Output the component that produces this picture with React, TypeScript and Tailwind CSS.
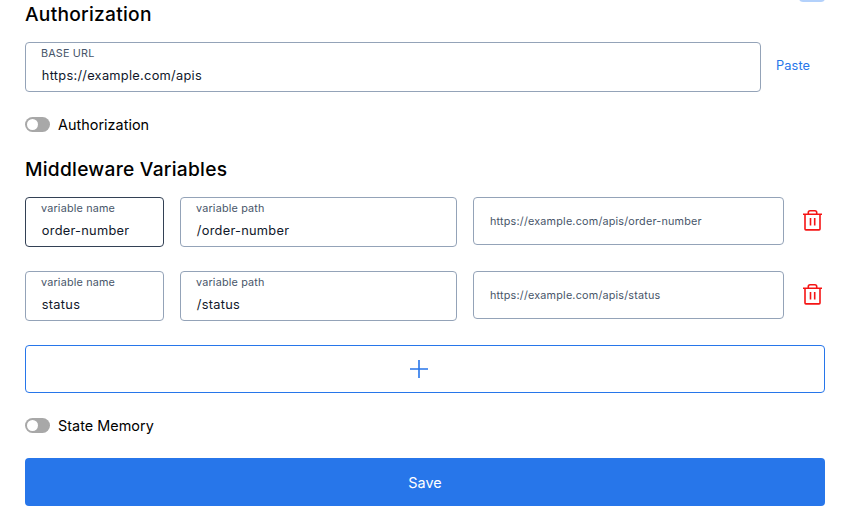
import React from 'react';

function Toggle({ label }: { label: string }) {
  return (
    <div className="flex h-6 items-center">
      <span className="flex h-[15px] w-[25px] items-center rounded-full bg-[#a8a8a8] px-0.5">
        <span className="h-[11px] w-[11px] rounded-full bg-white" />
      </span>
      <span className="ml-2 pt-0.5 text-[14.4px] leading-6 tracking-[0.03px]">{label}</span>
    </div>
  );
}

function Field({ label, value, className }: { label: string; value: string; className: string }) {
  return (
    <div className={`h-[50px] rounded border pl-[15px] ${className}`}>
      <div className="pt-[3px] text-[10.8px] leading-4 tracking-[0.18px] text-[#475569]">{label}</div>
      <div className="pl-[0.8px] pt-1 text-[12.8px] leading-5 tracking-[0.28px] text-[#0f172a]">{value}</div>
    </div>
  );
}

function Trash() {
  return (
    <svg width="20" height="24" viewBox="0 0 20 24" fill="none" stroke="#f51414" strokeWidth="1.6">
      <path d="M0 5.3h19M5.3 5.3V3.5q0-1.8 1.8-1.8h4.8q1.8 0 1.8 1.8v1.8M2 5.3V20q0 .9.9.9h13.2q.9 0 .9-.9V5.3M7.5 9v7.5M11.7 9v7.5" />
    </svg>
  );
}

function Row({ name, dark }: { name: string; dark?: boolean }) {
  return (
    <div className="flex h-[50px] gap-4">
      <Field label="variable name" value={name} className={dark ? 'w-[139px] border-[#334155]' : 'w-[139px] border-[#94a3b8]'} />
      <Field label="variable path" value={`/${name}`} className="w-[277px] border-[#94a3b8]" />
      <div className="flex h-12 w-[311px] items-center rounded border border-[#94a3b8] pl-4 pt-0.5 text-[10.8px] tracking-[0.2px] text-[#475569]">
        {`https://example.com/apis/${name}`}
      </div>
      <div className="ml-[3px] pt-3"><Trash /></div>
    </div>
  );
}

export default function App() {
  return (
    <main className="relative h-[514px] w-[844px] overflow-hidden bg-white pl-[25px] pr-[19px] font-['Inter',sans-serif] text-black">
      <div className="absolute left-[799px] top-[-10px] h-3 w-[26px] rounded bg-[#b3d1fb]" />
      <h2 className="h-[42px] text-[19.2px] font-medium leading-7 tracking-[0.25px]">Authorization</h2>
      <div className="flex h-[50px] items-center gap-[15px]">
        <Field label="BASE URL" value="https://example.com/apis" className="w-[736px] border-[#94a3b8]" />
        <button className="-mt-0.5 text-[12.8px] tracking-[0.1px] text-[#2776ea]">Paste</button>
      </div>
      <div className="mt-5"><Toggle label="Authorization" /></div>
      <h2 className="mt-[19px] h-[42px] text-[19.2px] font-medium leading-7 tracking-[0.25px]">Middleware Variables</h2>
      <div className="flex flex-col gap-6">
        <Row name="order-number" dark />
        <Row name="status" />
      </div>
      <button className="mt-6 flex h-12 w-[800px] items-center justify-center rounded border border-[#2776ea] pr-3 text-[#2776ea]">
        <svg width="18" height="18" viewBox="0 0 18 18" stroke="currentColor" strokeWidth="1.6"><path d="M9 0v18M0 9h18" /></svg>
      </button>
      <div className="mt-5"><Toggle label="State Memory" /></div>
      <button className="mt-[21px] h-12 w-[800px] rounded bg-[#2776ea] pt-0.5 text-[14.4px] text-white">Save</button>
    </main>
  );
}
